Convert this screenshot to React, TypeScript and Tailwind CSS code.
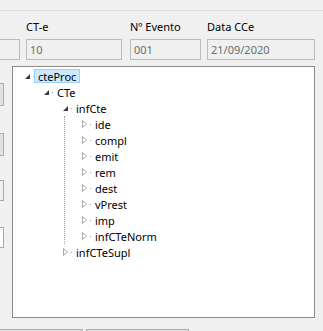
import React from "react";

type Node = { label: string; level: number; expanded?: boolean; selected?: boolean };

const Expanded = () => (
  <svg width="5" height="5" viewBox="0 0 5 5" className="block">
    <polygon points="5,0 5,5 0,5" fill="#3a3a3a" />
  </svg>
);

const Collapsed = () => (
  <svg width="5" height="8" viewBox="0 0 5 8" className="block">
    <polygon points="0.5,0.5 4.5,4 0.5,7.5" fill="none" stroke="#a8a8a8" strokeWidth="1" />
  </svg>
);

function Row({ node, pad }: { node: Node; pad: number }) {
  return (
    <div className="flex h-[16px] items-center" style={{ paddingLeft: pad }}>
      <div className="flex w-[8px] items-center">{node.expanded ? <Expanded /> : <Collapsed />}</div>
      <div className="h-[1px] w-[1px] bg-[#9a9a9a]" />
      <div
        className={
          node.selected
            ? "flex h-[14px] items-center border border-[#99d1ff] bg-[#cce8ff] pl-[3px] pr-[3px] text-black"
            : "flex h-[14px] items-center border border-transparent pl-[3px] pr-[3px] text-black"
        }
      >
        {node.label}
      </div>
    </div>
  );
}

const children = ["ide", "compl", "emit", "rem", "dest", "vPrest", "imp", "infCTeNorm"];

export default function App() {
  return (
    <div
      className="flex h-[331px] w-[323px] flex-col overflow-hidden bg-[#f0f0f0] text-[11px] leading-none text-black"
      style={{ fontFamily: '"Noto Sans", "Open Sans", sans-serif' }}
    >
      <div className="h-[11px] shrink-0 border-b border-[#dedede]" />
      <div className="mt-[7px] flex h-[16px] shrink-0 items-center">
        <div className="ml-[26px] w-[104px]">CT-e</div>
        <div className="w-[77px]">Nº Evento</div>
        <div>Data CCe</div>
      </div>
      <div className="mt-[5px] flex h-[21px] shrink-0">
        <div className="ml-[-1px] h-[21px] w-[21px] border border-[#bcbcbc] bg-[#f0f0f0]" />
        <div className="ml-[6px] flex h-[21px] w-[96px] items-center border border-[#bcbcbc] bg-[#f0f0f0] pl-[3px] text-[#6d6d6d]">
          10
        </div>
        <div className="ml-[8px] flex h-[21px] w-[71px] items-center border border-[#bcbcbc] bg-[#f0f0f0] pl-[3px] text-[#6d6d6d]">
          001
        </div>
        <div className="ml-[6px] flex h-[21px] w-[108px] items-center border border-[#bcbcbc] bg-[#f0f0f0] pl-[3px] text-[#6d6d6d]">
          21/09/2020
        </div>
      </div>
      <div className="mt-[6px] flex shrink-0">
        <div className="flex w-[12px] flex-col">
          <div className="ml-[-1px] mt-[17px] h-[23px] w-[5px] border border-[#adadad] bg-[#e1e1e1]" />
          <div className="ml-[-1px] mt-[27px] h-[23px] w-[5px] border border-[#adadad] bg-[#e1e1e1]" />
          <div className="ml-[-1px] mt-[24px] h-[21px] w-[5px] border border-[#a8a8a8] bg-[#f0f0f0]" />
          <div className="ml-[-1px] mt-[26px] h-[21px] w-[5px] border border-[#a8a8a8] bg-white" />
        </div>
        <div className="h-[252px] w-[303px] border border-[#8a8a8a] bg-white pt-[1px]">
          <Row node={{ label: "cteProc", level: 0, expanded: true, selected: true }} pad={12} />
          <Row node={{ label: "CTe", level: 1, expanded: true }} pad={31} />
          <Row node={{ label: "infCte", level: 2, expanded: true }} pad={50} />
          <div className="ml-[51px] border-l border-dotted border-[#a0a0a0]">
            {children.map((c) => (
              <Row key={c} node={{ label: c, level: 3 }} pad={17} />
            ))}
          </div>
          <Row node={{ label: "infCTeSupl", level: 2 }} pad={50} />
        </div>
      </div>
      <div className="mt-[11px] flex shrink-0">
        <div className="ml-[-1px] h-[10px] w-[84px] border border-[#adadad] bg-[#e1e1e1]" />
        <div className="ml-[3px] h-[10px] w-[103px] border border-[#adadad] bg-[#e1e1e1]" />
      </div>
    </div>
  );
}
